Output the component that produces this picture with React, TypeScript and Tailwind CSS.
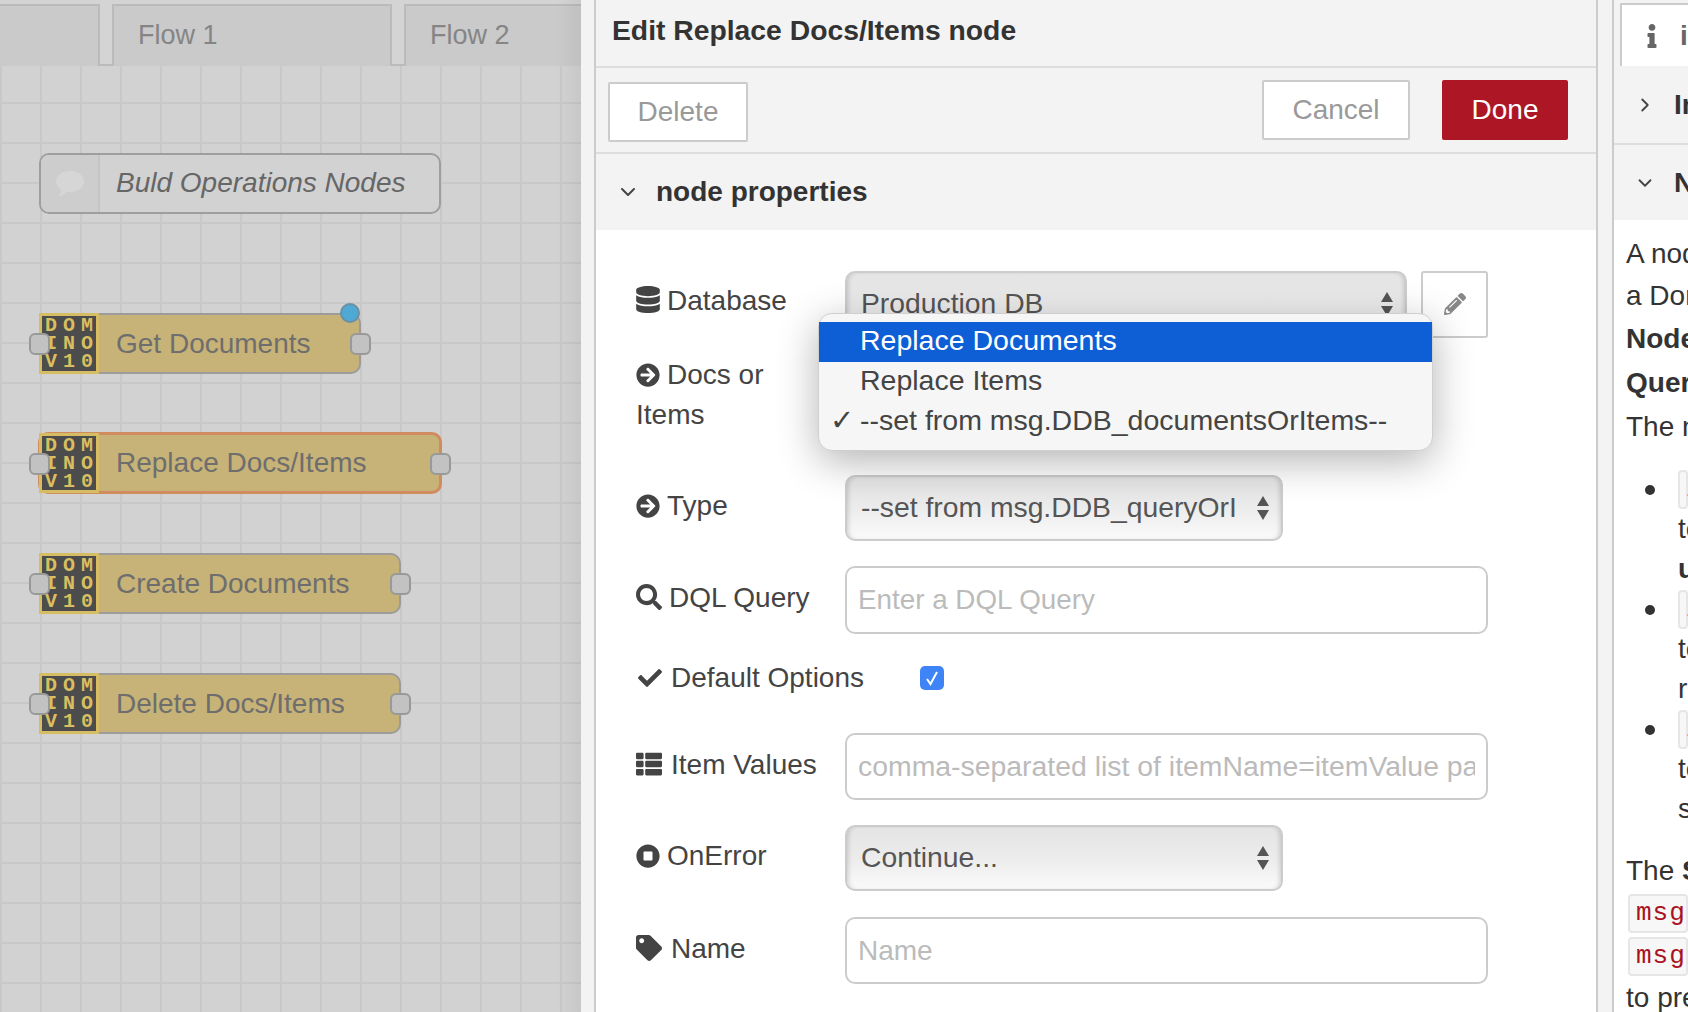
import { FaArrowCircleRight, FaCheck, FaDatabase, FaInfo, FaPencilAlt, FaSearch, FaStopCircle, FaTag, FaThList } from 'react-icons/fa';
import { LuChevronDown, LuChevronRight } from 'react-icons/lu';

function DominoIcon() {
  const letters = ['D', 'O', 'M', 'I', 'N', 'O', 'V', '1', '0'];
  return (
    <div className="w-[60px] shrink-0 self-stretch -my-[2px] -ml-[2px] bg-[#d6bc62] p-[3px]">
      <div className="grid grid-cols-3 h-full place-items-center bg-[#4c4c4c] font-['Liberation_Mono',monospace] font-bold text-[20px] leading-[17px] text-[#d9be5f]">
        {letters.map((l, i) => (
          <span key={i}>{l}</span>
        ))}
      </div>
    </div>
  );
}

function Port({ side }: { side: 'left' | 'right' }) {
  return (
    <div
      className={
        side === 'left'
          ? 'absolute -left-[12px] top-[18px] w-[21px] h-[22px] rounded-[6px] bg-[#c2c2c2] border-2 border-[#999999]'
          : 'absolute -right-[12px] top-[18px] w-[21px] h-[22px] rounded-[6px] bg-[#c2c2c2] border-2 border-[#999999]'
      }
    />
  );
}

function FlowNode({ label, className, selected, dot }: { label: string; className: string; selected?: boolean; dot?: boolean }) {
  return (
    <div
      className={
        'absolute flex items-center rounded-[10px] bg-[#c7b377] text-[28px] text-[#6e6e6e] ' +
        (selected ? 'h-[62px] border-[3px] border-[#d08b5e] ' : 'h-[61px] border-2 border-[#9c9c9c] ') +
        className
      }
    >
      <DominoIcon />
      <span className="pl-[17px] whitespace-nowrap">{label}</span>
      <Port side="left" />
      <Port side="right" />
      {dot && <div className="absolute -top-[12px] right-[-1px] w-[20px] h-[20px] rounded-full bg-[#4ea9d4] border-2 border-[#6d8fa3]" />}
    </div>
  );
}

function Tab({ label, className }: { label: string; className: string }) {
  return (
    <div className={"h-[62px] -mb-[2px] flex items-center pb-[2px] border-2 border-b-0 border-[#bbbbbb] bg-[#cacaca] text-[27px] text-[#858585] " + className}>
      {label}
    </div>
  );
}

function Workspace() {
  return (
    <div className="relative w-[581px] shrink-0 flex flex-col overflow-hidden">
      <div className="h-[66px] shrink-0 flex items-end gap-[12px] bg-[#d4d4d4] border-b-2 border-[#bbbbbb]">
        <Tab label="" className="w-[102px] -ml-[2px]" />
        <Tab label="Flow 1" className="w-[280px] pl-[24px]" />
        <Tab label="Flow 2" className="flex-1 pl-[24px] -mr-[2px]" />
      </div>
      <div className="relative flex-1 bg-[#d2d2d2] bg-[linear-gradient(to_right,#c8c8c8_2px,transparent_2px),linear-gradient(to_bottom,transparent_36px,#c8c8c8_36px,#c8c8c8_38px,transparent_38px)] bg-[size:40px_40px]">
        <div className="absolute left-[39px] top-[87px] w-[402px] h-[61px] flex items-center rounded-[10px] bg-[#d2d2d2] border-2 border-[#9e9e9e] overflow-hidden">
          <div className="w-[59px] h-full flex items-center justify-center bg-[#cdcdcd] border-r-2 border-[#c4c4c4]">
            <svg width="32" height="30" viewBox="0 0 32 30" fill="#d6d6d6">
              <path d="M16 2c8 0 14 4.500 14 10.500S24 23 16 23c-1 0-2 0-3-.2C11 25 8 27 4 27c2-2 3-4 3.200-6.500C4 18.500 2 15.800 2 12.500 2 6.500 8 2 16 2z" />
            </svg>
          </div>
          <span className="pl-[16px] pb-[2px] italic text-[28px] text-[#666666] whitespace-nowrap">Buld Operations Nodes</span>
        </div>
        <FlowNode label="Get Documents" className="left-[39px] top-[247px] w-[322px]" dot />
        <FlowNode label="Replace Docs/Items" className="left-[38px] top-[366px] w-[404px]" selected />
        <FlowNode label="Create Documents" className="left-[39px] top-[487px] w-[362px]" />
        <FlowNode label="Delete Docs/Items" className="left-[39px] top-[607px] w-[362px]" />
      </div>
      <div className="absolute right-0 top-0 bottom-0 w-[24px] bg-gradient-to-r from-transparent to-black/5" />
    </div>
  );
}

function Label({ icon, iconBox, className, children }: { icon: React.ReactNode; iconBox: string; className: string; children: React.ReactNode }) {
  return (
    <div className={'shrink-0 text-[28px] leading-[40px] text-[#444444] ' + className}>
      <span className={'inline-flex mr-[7px] align-[-3px] text-[#444444] ' + iconBox}>{icon}</span>
      {children}
    </div>
  );
}

function SelectArrows() {
  return (
    <svg width="14" height="26" viewBox="0 0 14 26" fill="#555555">
      <path d="M7 1l6 10H1zM7 25l6-10H1z" />
    </svg>
  );
}

function FakeSelect({ value, className }: { value: string; className: string }) {
  return (
    <div className={"flex items-center justify-between rounded-[10px] border-2 border-[#cccccc] bg-gradient-to-b from-[#e4e4e4] via-[#ececec] to-[#fafafa] shadow-[inset_4px_0_5px_-3px_rgba(0,0,0,0.18),inset_-4px_0_5px_-3px_rgba(0,0,0,0.18)] pl-[14px] pr-[11px] text-[28.3px] text-[#555555] whitespace-nowrap " + className}>
      <span className="overflow-hidden pb-[2px]">{value}</span>
      <SelectArrows />
    </div>
  );
}

function TextField({ placeholder, className }: { placeholder: string; className: string }) {
  return (
    <input
      placeholder={placeholder}
      className={"w-[643px] rounded-[10px] border-2 border-[#cccccc] bg-white px-[11px] text-[#555555] placeholder:text-[#bbbbbb] " + className}
    />
  );
}

function EditorTray() {
  return (
    <div className="w-[1004px] shrink-0 flex flex-col border-x-2 border-[#cccccc] bg-white">
      <div className="h-[68px] shrink-0 flex items-center pl-[16px] pb-[6px] bg-[#f3f3f3] border-b-2 border-[#dddddd] font-bold text-[28.3px] text-[#333333]">
        Edit Replace Docs/Items node
      </div>
      <div className="h-[86px] shrink-0 flex justify-between pl-[12px] pr-[28px] pt-[12px] bg-[#f3f3f3] border-b-2 border-[#dddddd] text-[28px]">
        <button className="mt-[2px] w-[140px] h-[60px] bg-white border-2 border-[#cccccc] rounded-[2px] text-[#999999]">Delete</button>
        <div className="flex gap-[32px]">
          <button className="w-[148px] h-[60px] bg-white border-2 border-[#cccccc] rounded-[2px] text-[#999999]">Cancel</button>
          <button className="w-[126px] h-[60px] bg-[#ad1625] rounded-[2px] text-white">Done</button>
        </div>
      </div>
      <div className="h-[76px] shrink-0 flex items-center pl-[20px] bg-[#f3f3f3] font-bold text-[28px] text-[#333333]">
        <LuChevronDown className="w-[24px] h-[24px] text-[#444444]" strokeWidth={2} />
        <span className="pl-[16px]">node properties</span>
      </div>

      <div className="relative flex-1 pl-[40px] pt-[40px]">
        <div className="flex items-center h-[68px]">
          <Label icon={<FaDatabase className="w-[24px] h-[27px]" />} iconBox="w-[24px]" className="w-[209px] pb-[6px]">Database</Label>
          <FakeSelect value="Production DB" className="w-[562px] h-[67px]" />
          <button className="ml-[14px] w-[67px] h-[67px] flex items-center justify-center border-2 border-[#cccccc] rounded-[3px] text-[#888888]">
            <FaPencilAlt className="w-[22px] h-[22px]" />
          </button>
        </div>
        <div className="h-[74px] mt-[17px]">
          <Label icon={<FaArrowCircleRight className="w-[24px] h-[24px]" />} iconBox="w-[24px]" className="w-[150px]">Docs or Items</Label>
        </div>
        <div className="flex items-center h-[66px] mt-[46px]">
          <Label icon={<FaArrowCircleRight className="w-[24px] h-[24px]" />} iconBox="w-[24px]" className="w-[209px] pb-[4px]">Type</Label>
          <FakeSelect value="--set from msg.DDB_queryOrI" className="w-[438px] h-[66px]" />
        </div>
        <div className="flex items-center h-[68px] mt-[25px]">
          <Label icon={<FaSearch className="w-[26px] h-[26px]" />} iconBox="w-[26px]" className="w-[209px] pb-[4px]">DQL Query</Label>
          <TextField placeholder="Enter a DQL Query" className="h-[68px] text-[27.8px]" />
        </div>
        <div className="flex items-center h-[24px] mt-[32px]">
          <Label icon={<FaCheck className="w-[28px] h-[24px]" />} iconBox="w-[28px]" className="w-[284px] whitespace-nowrap">Default Options</Label>
          <div className="w-[24px] h-[24px] flex items-center justify-center rounded-[5px] bg-[#3f84f6] text-white">
            <svg width="14" height="16" viewBox="0 0 14 16" fill="none" stroke="currentColor" strokeWidth="2">
              <path d="M2 9l3.500 5L12 2" />
            </svg>
          </div>
        </div>
        <div className="flex items-center h-[67px] mt-[43px]">
          <Label icon={<FaThList className="w-[30px] h-[26px] -ml-[2px]" />} iconBox="w-[28px]" className="w-[209px] pb-[4px]">Item Values</Label>
          <TextField placeholder="comma-separated list of itemName=itemValue pairs" className="h-[67px] text-[28.4px]" />
        </div>
        <div className="flex items-center h-[66px] mt-[25px]">
          <Label icon={<FaStopCircle className="w-[24px] h-[24px]" />} iconBox="w-[24px]" className="w-[209px] pb-[4px]">OnError</Label>
          <FakeSelect value="Continue..." className="w-[438px] h-[66px]" />
        </div>
        <div className="flex items-center h-[67px] mt-[26px]">
          <Label icon={<FaTag className="w-[26px] h-[26px]" />} iconBox="w-[28px]" className="w-[209px] pb-[4px]">Name</Label>
          <TextField placeholder="Name" className="h-[67px] text-[28px]" />
        </div>

        {/* open native select menu */}
        <div className="absolute left-[222px] top-[83px] w-[615px] h-[138px] pt-[8px] rounded-[14px] bg-[#f6f6f6] border border-[#cfcfcf] shadow-[0_10px_40px_rgba(0,0,0,0.3)] text-[28.5px] leading-[37px] text-[#444444] whitespace-nowrap">
          <div className="h-[40px] pl-[41px] bg-[#0e5ed6] text-white">Replace Documents</div>
          <div className="h-[40px] pl-[41px]">Replace Items</div>
          <div className="relative h-[40px] pl-[41px]">
            <span className="absolute left-[11px]">✓</span>
            --set from msg.DDB_documentsOrItems--
          </div>
        </div>
      </div>
    </div>
  );
}

function CodeChip({ children, className }: { children: string; className?: string }) {
  return (
    <div className={'h-[39px] rounded-[4px] border-2 border-[#e6e6e6] bg-[#f7f7f7] pl-[6px] font-["Liberation_Mono",monospace] text-[26px] leading-[34px] tracking-[1px] text-[#aa1122] whitespace-nowrap ' + (className ?? '')}>
      {children}
    </div>
  );
}

function HelpBullet({ first, second }: { first: string; second: React.ReactNode }) {
  return (
    <li className="relative pl-[52px] h-[120px]">
      <span className="absolute left-[19px] top-[15px] w-[10px] h-[10px] rounded-full bg-[#333333]" />
      <CodeChip>items</CodeChip>
      <div className="leading-[40px] whitespace-nowrap">{first}</div>
      <div className="leading-[40px] whitespace-nowrap">{second}</div>
    </li>
  );
}

function Sidebar() {
  return (
    <div className="flex-1 min-w-0 flex flex-col overflow-hidden border-l-2 border-[#cccccc] text-[28px] text-[#333333] bg-white">
      <div className="h-[66px] shrink-0 flex items-end pl-[6px] bg-[#f3f3f3]">
        <div className="h-[63px] flex-1 flex items-center pl-[22px] gap-[20px] bg-white border-l-2 border-t-2 border-[#cccccc] font-bold text-[#666666]">
          <FaInfo className="w-[16px] h-[24px] shrink-0" />
          <span>info</span>
        </div>
      </div>
      <div className="h-[79px] shrink-0 flex items-center pl-[20px] gap-[18px] bg-[#f3f3f3] border-b-2 border-[#dddddd] font-bold whitespace-nowrap">
        <LuChevronRight className="w-[22px] h-[22px] shrink-0 text-[#444444]" />
        <span>Information</span>
      </div>
      <div className="h-[75px] shrink-0 flex items-center pl-[20px] gap-[18px] bg-[#f3f3f3] font-bold whitespace-nowrap">
        <LuChevronDown className="w-[22px] h-[22px] shrink-0 text-[#444444]" />
        <span>Node Help</span>
      </div>
      <div className="pl-[12px] pt-[13px] whitespace-nowrap">
        <div className="leading-[42px]">A node</div>
        <div className="leading-[42px]">a Domino</div>
        <div className="leading-[44px] font-bold">Node</div>
        <div className="leading-[44px] font-bold">Query</div>
        <div className="leading-[43px]">The node</div>
        <ul className="mt-[22px]">
          <HelpBullet first="to" second={<b>u</b>} />
          <HelpBullet first="to" second="re" />
          <HelpBullet first="to" second="s" />
        </ul>
        <div className="leading-[43px] mt-[19px]">
          The <b>S</b>
        </div>
        <CodeChip className="mt-[2px] ml-[2px]">msg.</CodeChip>
        <CodeChip className="mt-[4px] ml-[2px]">msg.</CodeChip>
        <div className="leading-[43px]">to pre</div>
      </div>
    </div>
  );
}

export default function App() {
  return (
    <div className="w-[1688px] h-[1012px] flex overflow-hidden bg-[#f3f3f3] font-['Liberation_Sans',Arial,sans-serif]">
      <Workspace />
      <div className="w-[13px] shrink-0" />
      <EditorTray />
      <div className="w-[14px] shrink-0" />
      <Sidebar />
    </div>
  );
}
